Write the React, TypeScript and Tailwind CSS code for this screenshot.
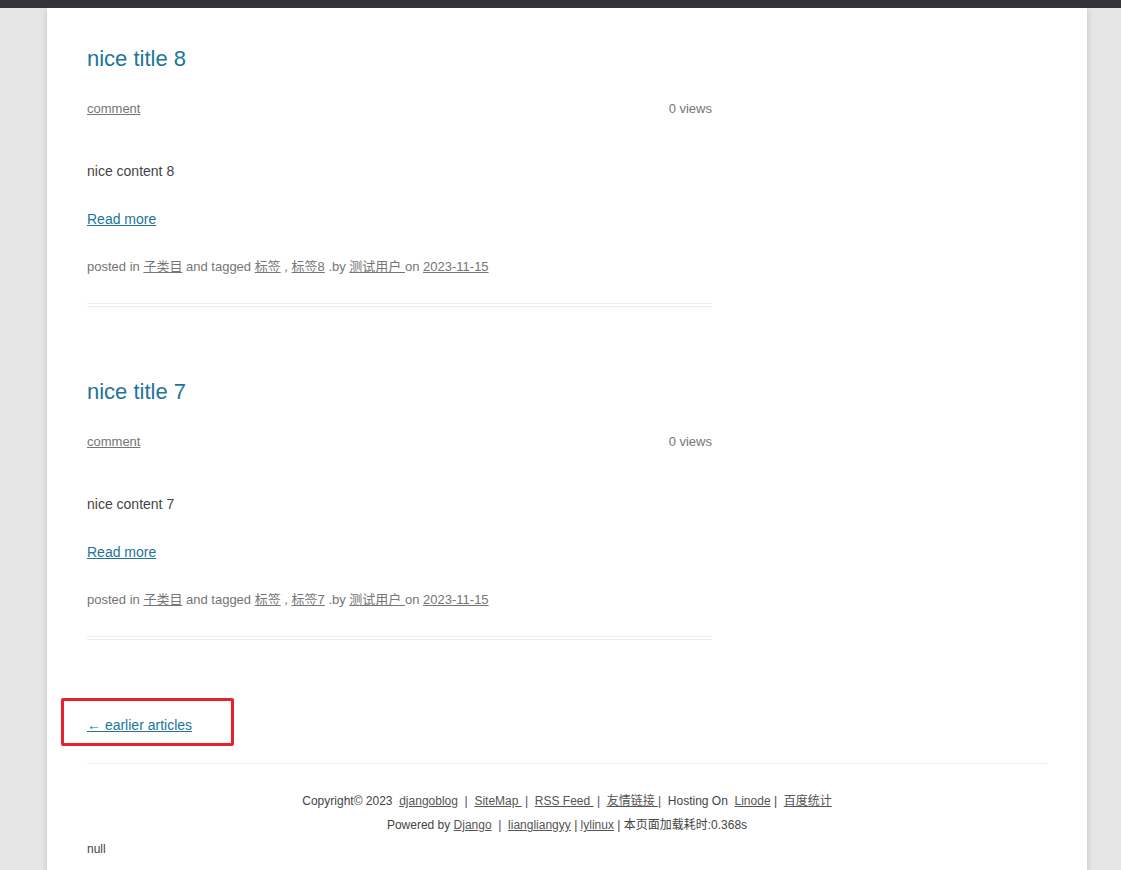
import type React from "react"

interface Post {
  id: number
  title: string
  content: string
  tag: string
}

const posts: Post[] = [
  { id: 8, title: "nice title 8", content: "nice content 8", tag: "标签8" },
  { id: 7, title: "nice title 7", content: "nice content 7", tag: "标签7" },
]

const font = "font-['Liberation_Sans','Noto_Sans_CJK_SC',sans-serif]"

const PostItem: React.FC<{ post: Post }> = ({ post }) => {
  return (
    <article className="border-b-4 border-double border-[#ededed] pb-6 mb-[73px]">
      <h2 className="text-[22px] leading-6 text-[#21759b]">{post.title}</h2>
      <div className="mt-[26px] flex justify-between text-[13px] leading-6 text-[#757575]">
        <a href="#" className="underline">comment</a>
        <span>0 views</span>
      </div>
      <p className="mt-[38px] text-[14px] leading-6 text-[#444]">{post.content}</p>
      <a href="#" className="mt-6 block w-fit text-[14px] leading-6 text-[#21759b] underline">
        Read more
      </a>
      <p className="mt-6 text-[13px] leading-6 text-[#757575] whitespace-pre">
        {"posted in "}
        <a href="#" className="underline">子类目</a>
        {" and tagged "}
        <a href="#" className="underline">标签</a>
        {" , "}
        <a href="#" className="underline">{post.tag}</a>
        {" .by "}
        <a href="#" className="underline">{"测试用户 "}</a>
        {"on "}
        <a href="#" className="underline">2023-11-15</a>
      </p>
    </article>
  )
}

export default function App() {
  return (
    <div className={`min-h-screen bg-[#e6e6e6] ${font}`}>
      <div className="h-2 bg-[#323337]" />
      <div className="ml-[47px] w-[1040px] min-h-[862px] bg-white px-10 pt-[39px] pb-3 shadow-[0_2px_6px_rgba(100,100,100,0.3)]">
        <main className="w-[625px]">
          {posts.map((p) => (
            <PostItem key={p.id} post={p} />
          ))}
        </main>

        <div className="relative -mt-[74px] pt-[74px]">
          <a href="#" className="block w-fit text-[14px] leading-6 text-[#21759b] underline">
            ← earlier articles
          </a>
          <div className="pointer-events-none absolute left-[-26px] top-[59px] h-[48px] w-[173px] rounded-[2px] border-[3px] border-[#e9202e]" />
        </div>

        <footer className="mt-[26px] border-t border-[#ededed] pt-[25px] text-[12px] leading-6 text-[#444]">
          <div className="text-center whitespace-pre">
            {"Copyright© 2023  "}
            <a href="#" className="underline text-[#555]">djangoblog</a>
            <span className="text-[#4b4b7a]">{"  |  "}</span>
            <a href="#" className="underline text-[#555]">{"SiteMap "}</a>
            <span className="text-[#4b4b7a]">{" |  "}</span>
            <a href="#" className="underline text-[#555]">{"RSS Feed "}</a>
            <span className="text-[#4b4b7a]">{" |  "}</span>
            <a href="#" className="underline text-[#555]">{"友情链接 |"}</a>
            {"  Hosting On  "}
            <a href="#" className="underline text-[#555]">Linode</a>
            {" |  "}
            <a href="#" className="underline text-[#555]">百度统计</a>
          </div>
          <div className="text-center whitespace-pre">
            {"Powered by "}
            <a href="#" className="underline text-[#555]">Django</a>
            <span className="text-[#4b4b7a]">{"  |  "}</span>
            <a href="#" className="underline text-[#555]">liangliangyy</a>
            {" | "}
            <a href="#" className="underline text-[#555]">lylinux</a>
            {" | 本页面加载耗时:0.368s"}
          </div>
          <div>null</div>
        </footer>
      </div>
    </div>
  )
}
